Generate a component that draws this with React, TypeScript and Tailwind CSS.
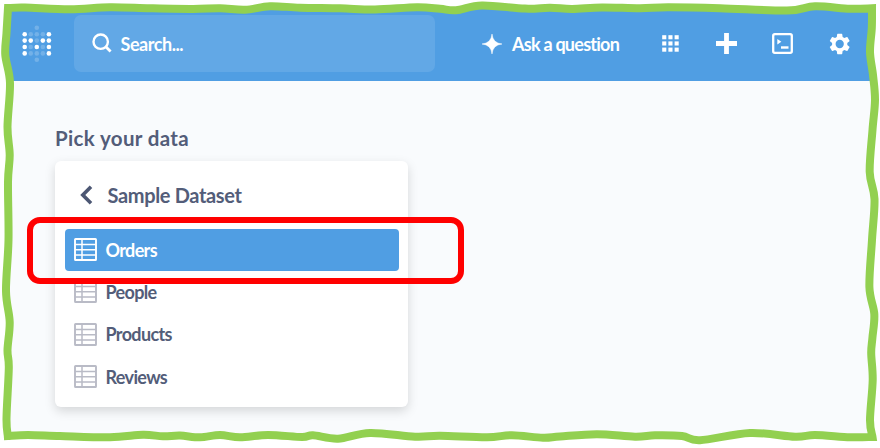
import React from "react";

type Point = [number, number];

// Centre line of the wavy frame, clockwise, one list for each side.
const top: Point[] = [[8, 8], [25, 7.6], [70, 9.2], [110, 7.2], [150, 8.3], [193, 9], [220, 8.3], [245, 9.8], [270, 6.2], [300, 7.7], [340, 8.3], [375, 9.5], [417, 7.2], [440, 8.8], [456, 10.2], [482, 5.4], [525, 8.6], [550, 7.7], [572, 8.9], [602, 7.4], [640, 8.3], [668, 7.3], [720, 8.2], [787, 10.6], [815, 6.3], [850, 8.8], [872, 8.2]];
const right: Point[] = [[872, 8.2], [871.8, 28], [870, 52], [873, 75], [875, 100], [872.5, 130], [869.7, 172], [874.5, 199], [872, 240], [869.4, 287], [874.3, 314], [872.4, 338], [871.2, 353], [872.7, 380], [870, 420], [872.5, 437]];
const bottom: Point[] = [[872.5, 437], [850, 437.2], [815, 435], [795, 436.7], [750, 433], [700, 440.2], [682, 436], [655, 435.3], [635, 436.7], [597, 434.2], [560, 436.5], [543, 437.8], [512, 435.2], [487, 437.3], [440, 435.8], [415, 436.7], [370, 433], [338, 438.7], [313, 435.3], [302, 437], [268, 435], [240, 437.3], [220, 435], [200, 437.3], [180, 435.6], [163, 436.3], [143, 434.8], [110, 437.3], [60, 436], [28, 434.9], [7.8, 436]];
const left: Point[] = [[7.8, 436], [6.5, 418], [8.8, 368], [7.5, 350], [9.7, 322], [6, 291], [8.5, 240], [8, 182], [9.7, 155], [7.5, 127], [10, 83], [5.3, 55], [6.5, 33], [8, 8]];

function curve(p: Point[]) {
  return p
    .slice(0, -1)
    .map((a, i) => {
      const b = p[i + 1];
      const prev = p[i - 1] ?? a;
      const next = p[i + 2] ?? b;
      const c1 = [a[0] + (b[0] - prev[0]) / 6, a[1] + (b[1] - prev[1]) / 6];
      const c2 = [b[0] - (next[0] - a[0]) / 6, b[1] - (next[1] - a[1]) / 6];
      return `C${c1.join(" ")} ${c2.join(" ")} ${b.join(" ")}`;
    })
    .join("");
}

const outline = `M8 8${curve(top)}${curve(right)}${curve(bottom)}${curve(left)}Z`;

function Frame() {
  return (
    <svg className="pointer-events-none absolute inset-0" width="880" height="448" viewBox="0 0 880 448">
      <path d={`M0 0H880V448H0Z${outline}`} fill="#fff" fillRule="evenodd" />
      <path d={outline} fill="none" stroke="#92d050" strokeWidth="8" />
    </svg>
  );
}

const logoRows = ["  .  ", "o...o", "oo.oo", "o.o.o", "o...o", "  .  "];

function Logo() {
  return (
    <svg width="32" height="38" viewBox="0 0 32 38" fill="#fff">
      {logoRows.flatMap((row, y) =>
        row.split("").map((c, x) =>
          c === " " ? null : (
            <circle key={`${x}-${y}`} cx={3.7 + x * 6.05} cy={2.8 + y * 6.4} r={2.3} opacity={c === "o" ? 1 : 0.2} />
          )
        )
      )}
    </svg>
  );
}

function TableIcon({ active }: { active?: boolean }) {
  return (
    <svg className="shrink-0" width="23" height="23" viewBox="0 0 23 23" fill="none" stroke={active ? "#fff" : "#b9bbc6"} strokeWidth="1.5">
      <rect x="1" y="1" width="21" height="21" rx="0.6" strokeWidth="1.9" />
      <path d="M8 1V22M1 6.5H22M1 11.7H22M1 16.9H22" />
    </svg>
  );
}

function Row({ name, active }: { name: string; active?: boolean }) {
  return (
    <div className={`flex items-center gap-[8.5px] rounded-[4px] pl-[9px] ${active ? "h-[41.5px] bg-[#509ee3] text-white" : "h-[42.4px] text-[#535d79]"}`}>
      <TableIcon active={active} />
      <span className="text-[18px] leading-none font-bold tracking-[-0.65px]">{name}</span>
    </div>
  );
}

export default function App() {
  return (
    <div className="relative h-[448px] w-[880px] overflow-hidden bg-[#f9fbfd] font-['Lato',sans-serif]">
      <header className="flex h-[81.3px] items-start bg-[#509ee3] text-white">
        <div className="mt-[24.5px] ml-[20.5px] w-[53.5px]">
          <Logo />
        </div>
        <div className="mt-[14.5px] flex h-[57.5px] w-[360.7px] items-center rounded-[7px] bg-[#62a8e6] pl-[17.5px]">
          <svg width="20" height="20" viewBox="0 0 20 20" fill="none" stroke="#fff" strokeWidth="2.4">
            <circle cx="8.7" cy="8.7" r="7.2" />
            <path d="M13.8 13.8L18.6 18.6" strokeWidth="2.8" />
          </svg>
          <span className="ml-[9px] pt-px text-[18px] leading-none font-bold tracking-[-0.45px]">Search...</span>
        </div>
        <nav className="flex h-[87px] items-center pl-[47.3px]">
          <svg width="20" height="20" viewBox="0 0 20 20" fill="#fff">
            <path d="M10 0Q10.8 9.2 20 10Q10.8 10.8 10 20Q9.2 10.8 0 10Q9.2 9.2 10 0Z" stroke="#fff" strokeWidth="0.5" />
          </svg>
          <span className="ml-[10px] w-[108px] text-[18px] leading-none font-bold tracking-[-0.75px] whitespace-nowrap">Ask a question</span>
          <svg className="ml-[42px]" width="17" height="17" viewBox="0 0 17 17" fill="#fff">
            {[0, 6.2, 12.4].flatMap((y) => [0, 6.2, 12.4].map((x) => <rect key={`${x}-${y}`} x={x + 0.2} y={y + 0.2} width="4.1" height="4.1" />))}
          </svg>
          <svg className="ml-[37px]" width="21" height="21" viewBox="0 0 21 21" fill="#fff">
            <path d="M8.1 0H12.9V8.1H21V12.9H12.9V21H8.1V12.9H0V8.1H8.1Z" />
          </svg>
          <svg className="ml-[35px]" width="21" height="21" viewBox="0 0 21 21" fill="none" stroke="#fff">
            <rect x="1.2" y="1.2" width="18.6" height="18.6" rx="1.6" strokeWidth="2.3" />
            <path d="M5.3 6L9.4 8.8L5.3 11.5Z" fill="#fff" stroke="none" />
            <path d="M9 14.5H16.5" strokeWidth="2.4" />
          </svg>
          <svg className="ml-[35px]" width="24" height="24" viewBox="0 0 24 24" fill="#fff">
            <path d="M19.14 12.94c.04-.3.06-.61.06-.94s-.02-.64-.07-.94l2.03-1.58a.49.49 0 0 0 .12-.61l-1.92-3.32a.49.49 0 0 0-.59-.22l-2.39.96a7 7 0 0 0-1.62-.94l-.36-2.54a.48.48 0 0 0-.48-.41h-3.84a.47.47 0 0 0-.47.41l-.36 2.54c-.59.24-1.13.57-1.62.94l-2.39-.96a.47.47 0 0 0-.59.22L2.74 8.87a.47.47 0 0 0 .12.61l2.03 1.58c-.05.3-.09.63-.09.94s.02.64.07.94l-2.03 1.58a.49.49 0 0 0-.12.61l1.92 3.32c.12.22.37.29.59.22l2.39-.96c.5.38 1.03.7 1.62.94l.36 2.54c.05.24.24.41.48.41h3.84c.24 0 .44-.17.47-.41l.36-2.54a6.9 6.9 0 0 0 1.62-.94l2.39.96c.22.08.47 0 .59-.22l1.92-3.32a.47.47 0 0 0-.12-.61zM12 15.9a3.9 3.9 0 1 1 0-7.8 3.9 3.9 0 0 1 0 7.8z" fillRule="evenodd" transform="translate(11.7 12) scale(1.06) translate(-12 -12)" />
          </svg>
        </nav>
      </header>
      <main className="pt-[46.5px] pl-[55px] text-[#535d79]">
        <h1 className="h-[33px] text-[20.5px] leading-[20px] font-bold tracking-[0.35px]">Pick your data</h1>
        <section className="h-[246.5px] w-[353px] rounded-[6px] bg-white px-[10px] shadow-[0_4px_11px_rgba(0,0,0,0.15)]">
          <div className="flex h-[68.3px] items-center pl-[14px]">
            <svg width="14" height="20" viewBox="0 0 14 20" fill="none" stroke="#4c5773" strokeWidth="3.6">
              <path d="M12 1.8L3.8 10L12 18.2" />
            </svg>
            <span className="ml-[14.5px] text-[20px] leading-none font-bold tracking-[-0.35px]">Sample Dataset</span>
          </div>
          <div className="w-[334px]">
            <Row name="Orders" active />
            <Row name="People" />
            <Row name="Products" />
            <Row name="Reviews" />
          </div>
        </section>
      </main>
      <div className="absolute top-[217px] left-[27.3px] h-[67px] w-[436.7px] rounded-[13px] border-[6px] border-[#ff0000]" />
      <Frame />
    </div>
  );
}
